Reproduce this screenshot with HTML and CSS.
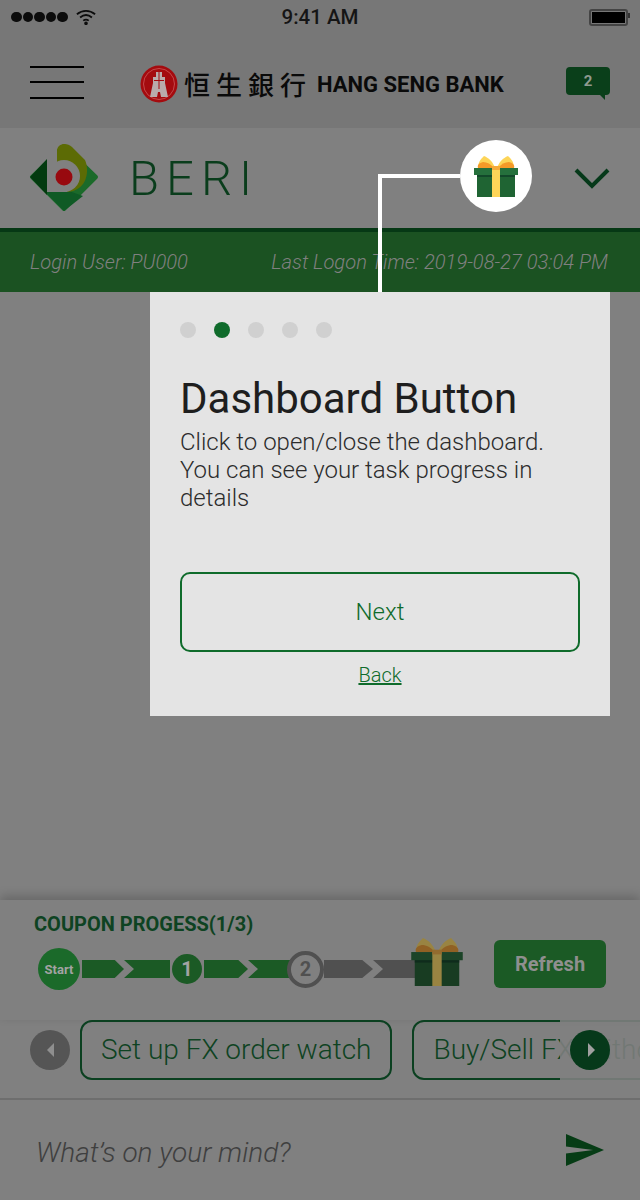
FILE: index.html
```html
<!DOCTYPE html>
<html lang="en">
<head>
    <meta charset="UTF-8">
    <meta name="viewport" content="width=device-width, initial-scale=1.0">
    <title>BERI - Dashboard Button</title>
    <link rel="stylesheet" href="styles.css">
</head>
<body>
    <svg class="defs" width="0" height="0">
        <symbol id="gift" viewBox="0 0 44 41">
            <path d="M21 12H6C2 8 7 3 10 0c5 2 9 6 11 12z" fill="#fdd558"/>
            <path d="M23 12h15c4-4-1-9-4-12-5 2-9 6-11 12z" fill="#fdd558"/>
            <path d="M20 12H4C3 9 5 7 9 6c4 0 8 2 11 6z" fill="#f59a28"/>
            <path d="M24 12h16c1-3-1-5-5-6-4 0-8 2-11 6z" fill="#f59a28"/>
            <rect x="3" y="18" width="38" height="23" fill="#1f6433"/>
            <rect y="12" width="44" height="7" fill="#25703c"/>
            <rect x="3" y="19" width="38" height="2" fill="#12482a"/>
            <rect x="18" y="12" width="8" height="29" fill="#fdd558"/>
            <rect x="18" y="10" width="8" height="4" fill="#f5ab3a"/>
        </symbol>
    </svg>

    <div class="screen">
        <!-- Status bar and bank header -->
        <header class="top">
            <div class="status">
                <div class="signal">
                    <i></i><i></i><i></i><i></i><i></i>
                    <svg class="wifi" width="20" height="16" viewBox="0 0 22 17" fill="none" stroke="#0c0c0c" stroke-width="2">
                        <path d="M1 5.500c6-5 14-5 20 0"/>
                        <path d="M4.500 9c4-3.300 9-3.300 13 0"/>
                        <path d="M8 12.500c2-1.500 4-1.500 6 0"/>
                        <circle cx="11" cy="15.500" r="1" fill="#0c0c0c"/>
                    </svg>
                </div>
                <span class="clock">9:41 AM</span>
                <div class="battery"><b></b></div>
            </div>
            <nav class="nav">
                <div class="burger"><i></i><i></i><i></i></div>
                <div class="bank">
                    <svg width="38" height="38" viewBox="0 0 38 38">
                        <circle cx="19" cy="19" r="18.500" fill="#a40b0f"/>
                        <circle cx="19" cy="19" r="15.500" fill="none" stroke="#c4484a" stroke-width="1"/>
                        <path d="M16 7h6v5h3v6l3 14H21l-1-5h-2l-1 5h-7l3-14v-6h3z" fill="#b9abab"/>
                        <path d="M18.500 7h1v17h-1zM14 15h10v1H14z" fill="#a40b0f"/>
                    </svg>
                    <span class="bank-zh">恒生銀行</span>
                    <span class="bank-en">HANG SENG BANK</span>
                </div>
                <div class="badge">2</div>
            </nav>
        </header>

        <!-- BERI title row -->
        <section class="brand">
            <svg class="brand-logo" width="70" height="70" viewBox="0 0 70 70">
                <polygon points="35,3 67,34 35,66 3,34" fill="#1b6a2a" stroke="#1b6a2a" stroke-width="4" stroke-linejoin="round"/>
                <path d="M18 16 1 34l17 18z" fill="#033a0f"/>
                <path d="M18 48h22l14 5-19 15-17-17z" fill="#0f5a25"/>
                <path d="M28 8c0-8 10-9 15-4l13 13c5 11 2 33-21 32h-7z" fill="#5c6b05"/>
                <circle cx="35" cy="33" r="16" fill="#808080"/>
                <rect x="18" width="10" height="49" fill="#808080"/>
                <rect x="18" y="47" width="20" height="2" fill="#808080"/>
                <circle cx="35" cy="34" r="8.500" fill="#98090f"/>
            </svg>
            <span class="brand-name">BERI</span>
            <svg class="chevron" width="36" height="22" viewBox="0 0 36 22" fill="none" stroke="#06391a" stroke-width="4">
                <path d="M2 3l16 16L34 3"/>
            </svg>
        </section>

        <div class="login-bar">
            <span>Login User: PU000</span>
            <span>Last Logon Time: 2019-08-27 03:04 PM</span>
        </div>

        <main class="content"></main>

        <!-- Coupon progress -->
        <section class="coupon">
            <h2>COUPON PROGESS(1/3)</h2>
            <div class="coupon-row">
                <div class="stepper">
                    <span class="step step-start">Start</span>
                    <i class="arrow arrow-head"></i>
                    <i class="arrow arrow-tail arrow-long"></i>
                    <span class="step step-done">1</span>
                    <i class="arrow arrow-head arrow-mid"></i>
                    <i class="arrow arrow-tail"></i>
                    <span class="step step-next">2</span>
                    <i class="arrow arrow-head arrow-off arrow-wide"></i>
                    <i class="arrow arrow-tail arrow-off"></i>
                    <svg class="step-gift" width="52" height="48"><use href="#gift"/></svg>
                </div>
                <button class="refresh" type="button">Refresh</button>
            </div>
        </section>

        <div class="chips">
            <span class="round round-prev"><i></i></span>
            <span class="chip">Set up FX order watch</span>
            <span class="chip">Buy/Sell FX Without</span>
            <div class="chips-fade"></div>
            <span class="round round-next"><i></i></span>
        </div>

        <footer class="ask">
            <span class="ask-text">What’s on your mind?</span>
            <svg width="38" height="32" viewBox="2 3 21 18" preserveAspectRatio="none"><path d="M2 21l21-9L2 3v7l15 2-15 2z" fill="#063c15"/></svg>
        </footer>

        <!-- Walkthrough layer -->
        <div class="coach-gift"><svg width="44" height="41"><use href="#gift"/></svg></div>
        <div class="coach-line"></div>
        <div class="coach-card">
            <div class="dots"><i></i><i class="on"></i><i></i><i></i><i></i></div>
            <h1>Dashboard Button</h1>
            <p>Click to open/close the dashboard. You can see your task progress in details</p>
            <button class="next" type="button">Next</button>
            <a class="back" href="#">Back</a>
        </div>
    </div>
</body>
</html>
```

FILE: styles.css
```css
body {
    margin: 0;
    font-family: Roboto, "Liberation Sans", sans-serif;
}
.defs {
    position: absolute;
}
.screen {
    position: relative;
    width: 640px;
    height: 1200px;
    overflow: hidden;
    display: flex;
    flex-direction: column;
    background: #808080;
}

/* Status bar */
.top {
    height: 128px;
    background: #777;
}
.status {
    height: 34px;
    padding: 0 12px 0 11px;
    display: flex;
    align-items: center;
    justify-content: space-between;
    color: #0c0c0c;
}
.signal {
    width: 120px;
    display: flex;
    align-items: center;
    gap: 1px;
}
.signal i {
    width: 10.500px;
    height: 10.500px;
    border-radius: 50%;
    background: #0c0c0c;
}
.wifi {
    margin-left: 7px;
}
.clock {
    font-size: 20.500px;
    font-weight: 500;
    color: #151515;
}
.battery {
    position: relative;
    width: 39px;
    height: 17px;
    box-sizing: border-box;
    padding: 1px;
    border: 2px solid #444;
    border-radius: 3px;
    margin-left: 80px;
}
.battery b {
    display: block;
    height: 100%;
    background: #000;
}
.battery::after {
    content: "";
    position: absolute;
    top: 2px;
    right: -4px;
    width: 2px;
    height: 5px;
    background: #333;
}

/* Bank header */
.nav {
    height: 94px;
    padding: 0 30px;
    display: flex;
    align-items: center;
}
.burger {
    width: 54px;
    height: 33px;
    display: flex;
    flex-direction: column;
    justify-content: space-between;
    margin-top: 2px;
}
.burger i {
    height: 2px;
    background: #000;
}
.bank {
    margin: 6px 0 0 56px;
    display: flex;
    align-items: center;
}
.bank-zh {
    margin: -2px 0 0 6px;
    font-family: "Noto Sans CJK TC", sans-serif;
    font-size: 26px;
    font-weight: 500;
    letter-spacing: 6px;
    color: #0a0a0a;
}
.bank-en {
    margin-left: 5px;
    font-size: 22px;
    font-weight: 700;
    color: #0a0a0a;
}
.badge {
    position: relative;
    width: 44px;
    height: 28px;
    margin-left: auto;
    border-radius: 4px;
    background: #0a3f1a;
    color: #8f9a90;
    font-size: 15px;
    font-weight: 700;
    line-height: 28px;
    text-align: center;
}
.badge::after {
    content: "";
    position: absolute;
    right: 5px;
    bottom: -5px;
    border-top: 6px solid #0a3f1a;
    border-left: 6px solid transparent;
}

/* BERI row */
.brand {
    height: 100px;
    padding: 0 30px 0 29px;
    display: flex;
    align-items: center;
    background: #808080;
}
.brand-logo {
    flex: none;
}
.brand-name {
    margin-left: 30px;
    font-size: 49px;
    font-weight: 300;
    letter-spacing: 7px;
    color: #0a3d1c;
}
.chevron {
    margin-left: auto;
}

.login-bar {
    height: 60px;
    padding: 0 32px 0 30px;
    display: flex;
    align-items: center;
    justify-content: space-between;
    border-top: 4px solid #063815;
    background: #1b5222;
    color: #808080;
    font-size: 20.150px;
    font-weight: 300;
    font-style: italic;
}
.content {
    flex: 1;
}

/* Coupon progress */
.coupon {
    height: 120px;
    box-sizing: border-box;
    padding: 12px 34px 0;
    box-shadow: 0 -4px 10px rgba(0, 0, 0, 0.2);
}
.coupon h2 {
    margin: 0;
    font-size: 20px;
    font-weight: 700;
    line-height: 24px;
    color: #0e4322;
}
.coupon-row {
    display: flex;
    align-items: flex-start;
    justify-content: space-between;
    margin-top: 3px;
}
.stepper {
    display: flex;
    align-items: center;
    margin: 5px 0 0 4px;
    height: 50px;
}
.step {
    flex: none;
    box-sizing: border-box;
    display: flex;
    align-items: center;
    justify-content: center;
    border-radius: 50%;
    font-weight: 700;
}
.step-start {
    width: 42px;
    height: 42px;
    margin-right: 2px;
    background: #1b6a2a;
    color: #a3a3a3;
    font-size: 13px;
}
.step-done {
    width: 30px;
    height: 30px;
    margin: 0 2px;
    background: #1b5a25;
    color: #a3a3a3;
    font-size: 20px;
}
.step-next {
    position: relative;
    width: 37px;
    height: 37px;
    margin: 0 0 0 -3px;
    border: 4px solid #505050;
    background: #808080;
    color: #505050;
    font-size: 20px;
}
.arrow {
    flex: none;
    width: 42px;
    height: 18px;
    background: #1b5a25;
}
.arrow-head {
    clip-path: polygon(0 0, 78% 0, 100% 50%, 78% 100%, 0 100%);
}
.arrow-tail {
    clip-path: polygon(0 0, 100% 0, 100% 100%, 0 100%, 10px 50%);
}
.arrow-long {
    width: 46px;
}
.arrow-mid {
    width: 44px;
}
.arrow-off {
    background: #505050;
}
.arrow-wide {
    width: 49px;
}
.step-gift {
    position: relative;
    margin: 0 0 14px -4px;
    filter: brightness(0.62) saturate(0.85);
}
.refresh {
    width: 112px;
    height: 48px;
    margin-top: 1px;
    padding: 0;
    border: none;
    border-radius: 6px;
    background: #1b5a25;
    color: #8f8f8f;
    font-family: inherit;
    font-size: 20px;
    font-weight: 700;
}

/* Suggestion chips */
.chips {
    position: relative;
    height: 78px;
    padding: 0 0 0 30px;
    display: flex;
    align-items: flex-start;
    gap: 20px;
    overflow: hidden;
    border-bottom: 2px solid #6e6e6e;
    white-space: nowrap;
}
.chip {
    flex: none;
    box-sizing: border-box;
    height: 60px;
    padding: 0 19px;
    border: 2px solid #0b4020;
    border-radius: 12px;
    color: #0e4322;
    font-size: 28px;
    font-weight: 300;
    line-height: 56px;
}
.round {
    flex: none;
    width: 40px;
    height: 40px;
    margin-top: 10px;
    border-radius: 50%;
    display: flex;
    align-items: center;
    justify-content: center;
}
.round-prev {
    margin-right: -10px;
    background: #555;
}
.round-next {
    position: absolute;
    top: 0;
    left: 570px;
    background: #06391a;
}
.round i {
    border-top: 7px solid transparent;
    border-bottom: 7px solid transparent;
}
.round-prev i {
    border-right: 7px solid #8f8f8f;
}
.round-next i {
    border-left: 7px solid #a0a0a0;
    margin-left: 3px;
}
.chips-fade {
    position: absolute;
    top: 0;
    bottom: 0;
    left: 560px;
    right: 0;
    background: rgba(128, 128, 128, 0.88);
}

/* Message box */
.ask {
    height: 100px;
    padding: 0 36px;
    display: flex;
    align-items: center;
    justify-content: space-between;
}
.ask-text {
    margin-top: 4px;
    color: #3f3f3f;
    font-size: 28px;
    font-weight: 300;
    font-style: italic;
}

/* Walkthrough layer */
.coach-gift {
    position: absolute;
    top: 140px;
    left: 460px;
    width: 72px;
    height: 72px;
    border-radius: 50%;
    background: #fff;
    display: flex;
    align-items: center;
    justify-content: center;
}
.coach-line {
    position: absolute;
    top: 174px;
    left: 378px;
    width: 82px;
    height: 118px;
    box-sizing: border-box;
    border-top: 4px solid #fff;
    border-left: 4px solid #fff;
}
.coach-card {
    position: absolute;
    top: 292px;
    left: 150px;
    width: 460px;
    height: 424px;
    box-sizing: border-box;
    padding: 30px 30px 0;
    background: #e4e4e4;
}
.dots {
    display: flex;
    gap: 18px;
}
.dots i {
    width: 16px;
    height: 16px;
    border-radius: 50%;
    background: #d0d0d0;
}
.dots .on {
    background: #0f6b2b;
}
.coach-card h1 {
    margin: 32px 0 0;
    font-size: 42px;
    font-weight: 400;
    line-height: 58px;
    color: #1e1e1e;
}
.coach-card p {
    margin: 0;
    font-size: 24px;
    font-weight: 300;
    line-height: 28px;
    color: #2c2c2c;
}
.next {
    display: block;
    width: 400px;
    height: 80px;
    margin-top: 60px;
    padding: 0;
    border: 2px solid #0f6b2b;
    border-radius: 10px;
    background: transparent;
    color: #0f6b2b;
    font-family: inherit;
    font-size: 24px;
    font-weight: 300;
}
.back {
    display: block;
    margin-top: 9px;
    color: #0f6b2b;
    font-size: 20px;
    font-weight: 300;
    line-height: 28px;
    text-align: center;
}
```
